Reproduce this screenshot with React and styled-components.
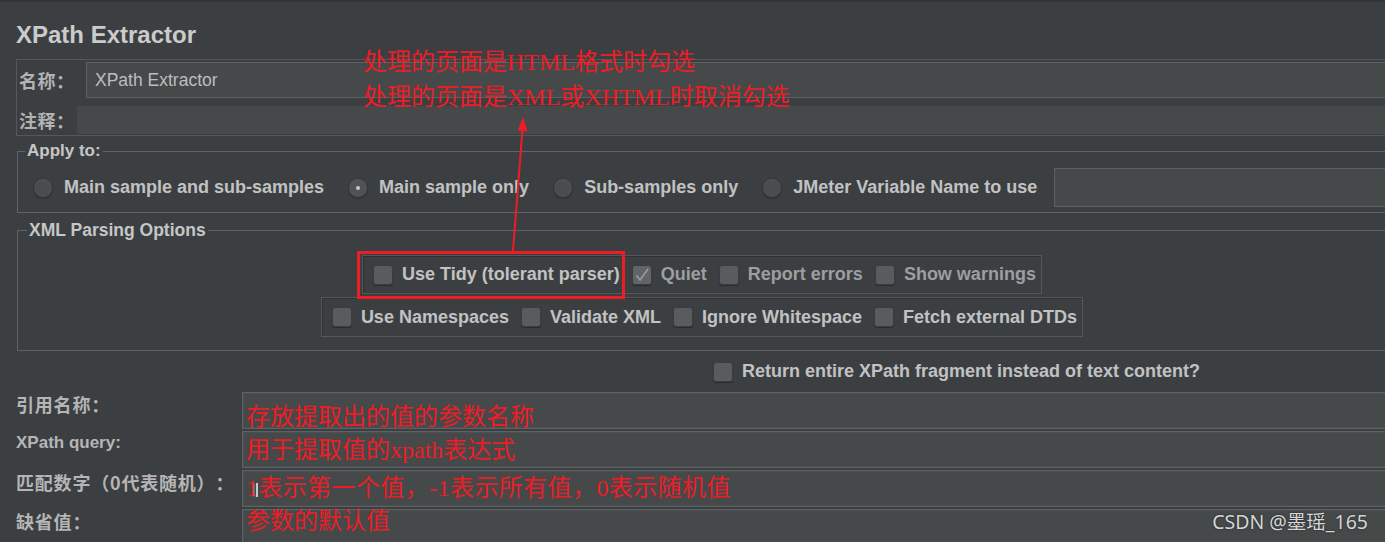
import React from 'react';
import styled, { createGlobalStyle } from 'styled-components';

const GlobalStyle = createGlobalStyle`
  html, body {
    margin: 0;
    padding: 0;
    background: #3c3f41;
    overflow: hidden;
  }
`;

const Page = styled.div`
  position: relative;
  width: 1385px;
  height: 542px;
  overflow: hidden;
  background: #3c3f41;
  font-family: "Liberation Sans", "Noto Sans CJK SC", sans-serif;
  color: #c2c2c2;
  border-top: 2px solid #323436;
  box-sizing: border-box;
  text-spacing-trim: space-all;
`;

const Header = styled.div`
  height: 49px;
  padding: 8px 0 0 16px;
  display: flex;
  align-items: center;
`;

const Title = styled.h1`
  margin: 0;
  font-size: 24px;
  font-weight: 700;
  color: #cbcbcb;
`;

const NamePanel = styled.div`
  margin: 0 -4px 0 16px;
  padding: 2px 0 1px 2px;
  border: 1px solid #55585a;
  display: flex;
  flex-direction: column;
  gap: 8px;
`;

const FormRow = styled.div`
  display: flex;
  align-items: center;
`;

const CnLabel = styled.span`
  width: ${p => p.$w}px;
  flex: none;
  font-family: "Noto Sans CJK SC", sans-serif;
  font-size: 18px;
  letter-spacing: 0.5px;
  font-weight: 700;
  color: #b3b3b3;
  white-space: nowrap;
  text-spacing-trim: space-all;
`;

const TextInput = styled.div`
  flex: 1;
  height: ${p => p.$h}px;
  box-sizing: border-box;
  display: flex;
  align-items: center;
  padding-left: 8px;
  background: #45494a;
  border: 1px solid ${p => (p.$plain ? '#45494a' : '#5d6163')};
  font-size: 17.5px;
  color: #bdbdbd;
`;

const Group = styled.fieldset`
  margin: ${p => p.$mt}px -10px 0 17px;
  padding: 0;
  border: 1px solid #616466;
  min-width: 0;
`;

const Legend = styled.legend`
  margin-left: ${p => p.$ml}px;
  padding: 0 2px;
  font-size: ${p => p.$fs}px;
  font-weight: 700;
  line-height: 20px;
  color: #c6c6c6;
`;

const RadioRow = styled.div`
  display: flex;
  align-items: center;
  height: 39px;
  padding: 7px 0 5px 15px;
`;

const RadioItem = styled.label`
  display: flex;
  align-items: center;
  gap: 11px;
  margin-right: 24px;
  font-size: 18px;
  font-weight: 700;
  white-space: nowrap;
`;

const Radio = styled.span`
  position: relative;
  width: 20px;
  height: 20px;
  flex: none;
  border-radius: 50%;
  background: ${p => (p.$on ? '#505355' : '#4a4d4f')};
  border: 1px solid #37393b;
  box-sizing: border-box;
  box-shadow: 0 1px 1px #2c2e30, inset 0 1px 0 #56595b;

  &::after {
    content: '';
    display: ${p => (p.$on ? 'block' : 'none')};
    position: absolute;
    left: 7px;
    top: 7px;
    width: 4px;
    height: 4px;
    border-radius: 50%;
    background: #c9c9c9;
  }
`;

const VarInput = styled.div`
  flex: 1;
  height: 39px;
  margin-left: -7px;
  background: #45494a;
  border: 1px solid #5d6163;
  box-sizing: border-box;
`;

const Options = styled.div`
  display: flex;
  flex-direction: column;
  align-items: center;
  gap: 3px;
  padding: 15px 8px 13px 0;
`;

const OptionBox = styled.div`
  display: flex;
  align-items: center;
  gap: 12px;
  height: ${p => p.$h}px;
  box-sizing: border-box;
  padding: 0 5px 0 10px;
  border: 1px solid #55585a;
  box-shadow: inset 1px 1px 0 #2e3032;
`;

const Check = styled.label`
  display: flex;
  align-items: center;
  gap: 9px;
  font-size: 18px;
  font-weight: 700;
  white-space: nowrap;
  color: ${p => (p.$dim ? '#9c9ea0' : '#c2c2c2')};
`;

const Box = styled.span`
  width: 20px;
  height: 20px;
  flex: none;
  box-sizing: border-box;
  border-radius: 3px;
  background: ${p => (p.$on ? '#626567' : '#595c5e')};
  border: 1px solid #3a3c3e;
  box-shadow: 0 1px 1px #2a2c2e;
  display: flex;
  align-items: center;
  justify-content: center;
`;

const ReturnRow = styled.div`
  height: 41px;
  display: flex;
  align-items: center;
  padding-left: 713px;
`;

const Params = styled.div`
  display: grid;
  grid-template-columns: 242px 1fr;
  grid-auto-rows: 37px;
  row-gap: 2px;
`;

const ParamLabel = styled.span`
  padding: 2px 0 0 16px;
  line-height: 20px;
  font-family: ${p => (p.$latin ? '"Liberation Sans", sans-serif' : '"Noto Sans CJK SC", sans-serif')};
  font-size: ${p => (p.$latin ? 17 : 18)}px;
  letter-spacing: ${p => (p.$latin ? 0 : 0.8)}px;
  font-weight: 700;
  color: #b5b5b5;
  white-space: nowrap;
  text-spacing-trim: space-all;
`;

const ParamField = styled.div`
  position: relative;
  margin-right: -4px;
  box-sizing: border-box;
  background: #45494a;
  border: 1px solid #5e6264;
  box-shadow: inset 0 0 0 1px #4b4f51;
  padding-left: 3px;
`;

const RedText = styled.div`
  margin-top: ${p => p.$dy}px;
  font-family: "Liberation Serif", "Noto Sans CJK SC", serif;
  font-size: 24px;
  line-height: 28px;
  letter-spacing: ${p => p.$ls || 0}px;
  color: #ee1c25;
  white-space: nowrap;
  text-spacing-trim: space-all;
`;

const Caret = styled.span`
  position: absolute;
  left: 13px;
  top: 12px;
  width: 2px;
  height: 14px;
  background: #c8c8c8;
  box-shadow: -3px 0 0 -0.5px #8e8e8e;
`;

const Note = styled.div`
  position: absolute;
  left: 363px;
  top: 43px;
  font-family: "Liberation Serif", "Noto Sans CJK SC", serif;
  font-size: 24px;
  line-height: 35px;
  color: #ee1c25;
  white-space: nowrap;
`;

const Frame = styled.div`
  position: absolute;
  left: 357px;
  top: 249px;
  width: 268px;
  height: 48px;
  box-sizing: border-box;
  border: 3px solid #ee1c25;
`;

const Arrow = styled.svg`
  position: absolute;
  left: 505px;
  top: 110px;
`;

const Watermark = styled.div`
  position: absolute;
  right: 17px;
  bottom: 7px;
  font-family: "Noto Sans", "Noto Sans CJK SC", sans-serif;
  font-size: 19.5px;
  color: #d6d6d6;
  text-shadow: 0 0 2px #1e1f20;
`;

const CheckBox = ({ on, dim, children }) => (
  <Check $dim={dim}>
    <Box $on={on}>
      {on && (
        <svg width="16" height="16" viewBox="0 0 16 16">
          <path d="M2.5 8.5 L6 13 L14 2" fill="none" stroke="#9b9d9f" strokeWidth="1.6" />
        </svg>
      )}
    </Box>
    {children}
  </Check>
);

const radios = ['Main sample and sub-samples', 'Main sample only', 'Sub-samples only', 'JMeter Variable Name to use'];

const params = [
  { label: '引用名称：', text: '存放提取出的值的参数名称', dy: 10 },
  { label: 'XPath query:', latin: true, text: '用于提取值的xpath表达式', dy: 4 },
  { label: '匹配数字（0代表随机）：', text: '1表示第一个值，-1表示所有值，0表示随机值', dy: 3, ls: 0.4, caret: true },
  { label: '缺省值：', text: '参数的默认值', dy: -3 },
];

const App = () => (
  <Page>
    <GlobalStyle />
    <Header>
      <Title>XPath Extractor</Title>
    </Header>

    <NamePanel>
      <FormRow>
        <CnLabel $w={67}>名称：</CnLabel>
        <TextInput $h={36}>XPath Extractor</TextInput>
      </FormRow>
      <FormRow>
        <CnLabel $w={58}>注释：</CnLabel>
        <TextInput $h={28} $plain />
      </FormRow>
    </NamePanel>

    <Group $mt={5}>
      <Legend $ml={7} $fs={17}>Apply to:</Legend>
      <RadioRow>
        {radios.map((r, i) => (
          <RadioItem key={r}>
            <Radio $on={i === 1} />
            {r}
          </RadioItem>
        ))}
        <VarInput />
      </RadioRow>
    </Group>

    <Group $mt={7}>
      <Legend $ml={9} $fs={17.5}>XML Parsing Options</Legend>
      <Options>
        <OptionBox $h={39}>
          <CheckBox>Use Tidy (tolerant parser)</CheckBox>
          <CheckBox on dim>Quiet</CheckBox>
          <CheckBox dim>Report errors</CheckBox>
          <CheckBox dim>Show warnings</CheckBox>
        </OptionBox>
        <OptionBox $h={40}>
          <CheckBox>Use Namespaces</CheckBox>
          <CheckBox>Validate XML</CheckBox>
          <CheckBox>Ignore Whitespace</CheckBox>
          <CheckBox>Fetch external DTDs</CheckBox>
        </OptionBox>
      </Options>
    </Group>

    <ReturnRow>
      <CheckBox>Return entire XPath fragment instead of text content?</CheckBox>
    </ReturnRow>

    <Params>
      {params.map(p => (
        <React.Fragment key={p.label}>
          <ParamLabel $latin={p.latin}>{p.label}</ParamLabel>
          <ParamField>
            <RedText $dy={p.dy} $ls={p.ls}>{p.text}</RedText>
            {p.caret && <Caret />}
          </ParamField>
        </React.Fragment>
      ))}
    </Params>

    <Note>
      处理的页面是HTML格式时勾选
      <br />
      处理的页面是XML或XHTML时取消勾选
    </Note>
    <Frame />
    <Arrow width="30" height="145" viewBox="0 0 30 145">
      <line x1="8" y1="139" x2="17.4" y2="18" stroke="#ee1c25" strokeWidth="2" />
      <polygon points="18.2,5 22.6,19.4 12.6,18.6" fill="#ee1c25" />
    </Arrow>
    <Watermark>CSDN @墨瑶_165</Watermark>
  </Page>
);

export default App;
